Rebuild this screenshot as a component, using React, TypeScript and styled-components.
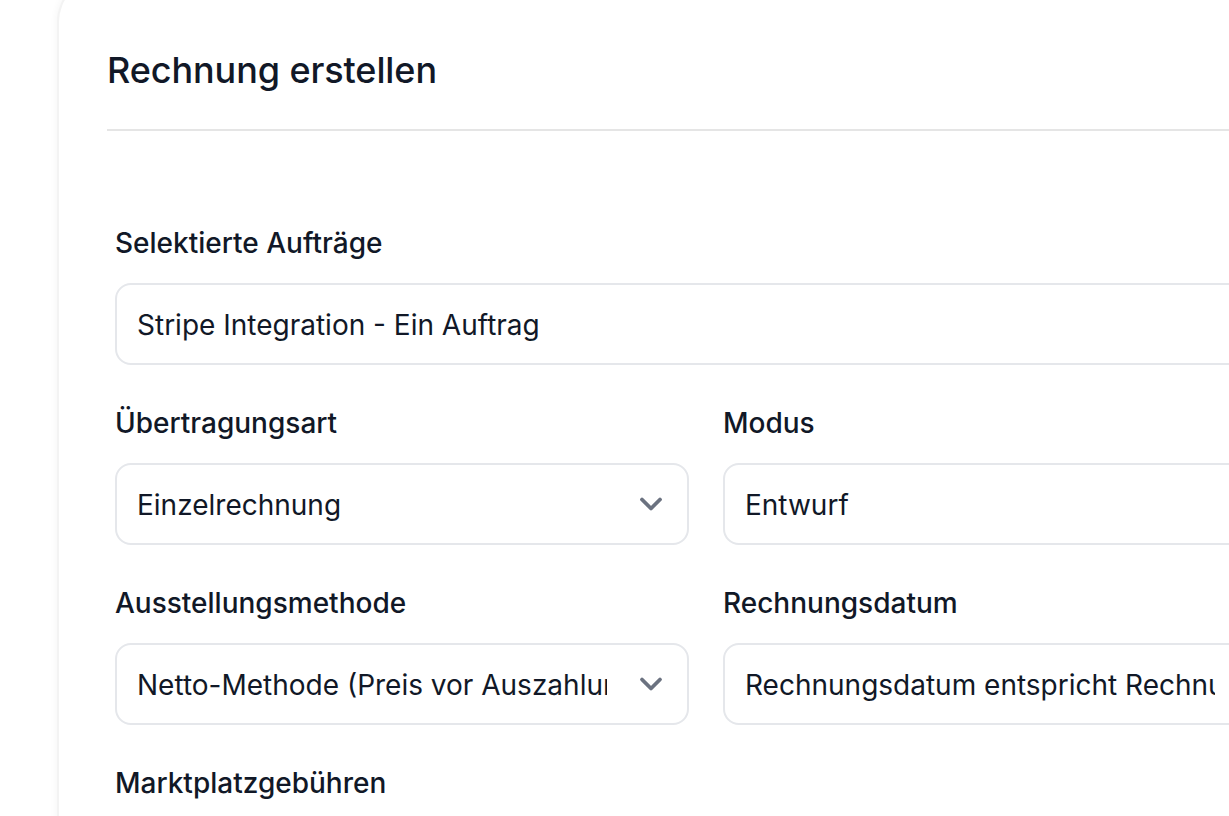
import styled, { createGlobalStyle } from "styled-components";

const Global = createGlobalStyle`
  html, body {
    margin: 0;
    padding: 0;
    background: #ffffff;
    overflow: hidden;
  }
  body {
    font-family: Inter, "Noto Sans", sans-serif;
    color: #111827;
  }
`;

const Page = styled.div`
  width: 1229px;
  height: 816px;
  overflow: hidden;
`;

const Panel = styled.section`
  margin-left: 57px;
  margin-top: -24px;
  width: 1300px;
  min-height: 900px;
  box-sizing: border-box;
  padding: 70px 0 0 48px;
  border-left: 2px solid #f3f3f3;
  border-top: 2px solid #f3f3f3;
  border-top-left-radius: 46px;
  box-shadow: -2px 0 6px rgba(0, 0, 0, 0.03);
  background: #fff;
`;

const Header = styled.header`
  padding-bottom: 36px;
  border-bottom: 2px solid #e5e5e5;
`;

const Title = styled.h1`
  margin: 0;
  font-size: 36px;
  line-height: 45px;
  font-weight: 500;
  color: #111827;
  letter-spacing: -0.1px;
`;

const Form = styled.form`
  width: 1182px;
  padding: 96px 0 0 8px;
  display: flex;
  flex-direction: column;
  gap: 42px;
`;

const Row = styled.div`
  display: grid;
  grid-template-columns: 1fr 1fr;
  column-gap: 34px;
`;

const Field = styled.div`
  display: flex;
  flex-direction: column;
  min-width: 0;
`;

const Label = styled.label`
  font-size: 28px;
  line-height: 32px;
  font-weight: 500;
  color: #111827;
  margin-bottom: 24px;
`;

const Box = styled.div<{ $select?: boolean }>`
  position: relative;
  height: 82px;
  box-sizing: border-box;
  border: 2px solid #e5e7eb;
  border-radius: 16px;
  background: #fff;
  display: flex;
  align-items: center;
  padding: 0 ${(p) => (p.$select ? "80px" : "20px")} 0 20px;
  overflow: hidden;
`;

const Value = styled.span`
  font-size: 28px;
  font-weight: 400;
  color: #111827;
  white-space: nowrap;
  overflow: hidden;
  width: 100%;
  padding-top: 2px;
`;

const Chevron = styled.svg`
  position: absolute;
  right: 24px;
  top: 50%;
  width: 24px;
  height: 16px;
  margin-top: -8px;
`;

function Select({ value }: { value: string }) {
  return (
    <Box $select>
      <Value>{value}</Value>
      <Chevron viewBox="0 0 24 16" fill="none">
        <polyline
          points="3,3.5 12,12.5 21,3.5"
          stroke="#6b7280"
          strokeWidth="3.8"
          strokeLinecap="round"
          strokeLinejoin="round"
        />
      </Chevron>
    </Box>
  );
}

export default function App() {
  return (
    <Page>
      <Global />
      <Panel>
        <Header>
          <Title>Rechnung erstellen</Title>
        </Header>
        <Form>
          <Field>
            <Label>Selektierte Aufträge</Label>
            <Box>
              <Value>Stripe Integration - Ein Auftrag</Value>
            </Box>
          </Field>
          <Row>
            <Field>
              <Label>Übertragungsart</Label>
              <Select value="Einzelrechnung" />
            </Field>
            <Field>
              <Label>Modus</Label>
              <Select value="Entwurf" />
            </Field>
          </Row>
          <Row>
            <Field>
              <Label>Ausstellungsmethode</Label>
              <Select value="Netto-Methode (Preis vor Auszahlung)" />
            </Field>
            <Field>
              <Label>Rechnungsdatum</Label>
              <Select value="Rechnungsdatum entspricht Rechnungsstellung" />
            </Field>
          </Row>
          <Field>
            <Label>Marktplatzgebühren</Label>
          </Field>
        </Form>
      </Panel>
    </Page>
  );
}
